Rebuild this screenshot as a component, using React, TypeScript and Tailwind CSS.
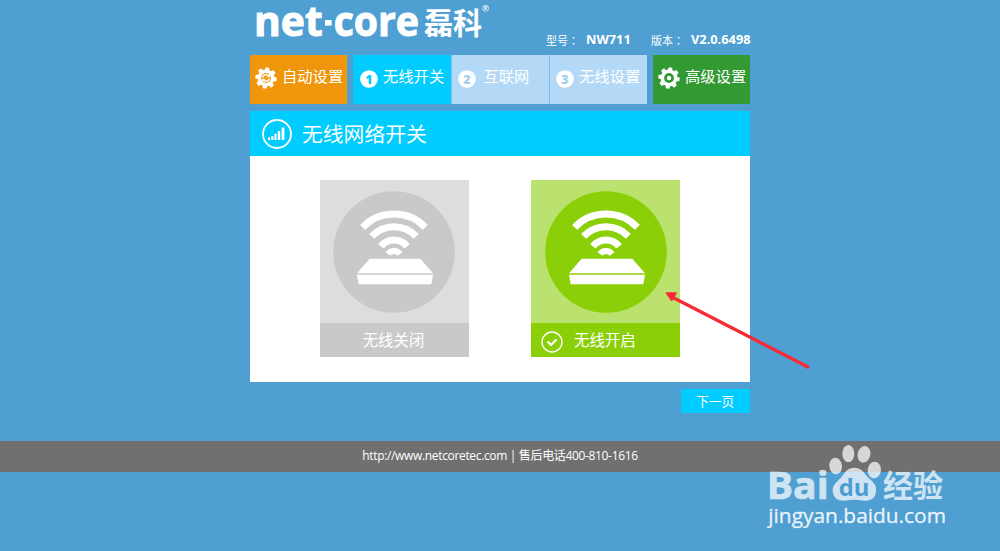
import type { ReactNode } from "react";

const steps = [
    { no: "1", label: "无线开关", box: "w-[98px] pl-[7px] bg-[#00ccff]", color: "fill-[#00ccff]", text: "ml-[5px]" },
    { no: "2", label: "互联网", box: "w-[97px] pl-[6px] ml-[0.5px] bg-[#b3d9f7]", color: "fill-[#a3cff1]", text: "ml-[8px]" },
    { no: "3", label: "无线设置", box: "ml-[1.5px] pl-[6px] w-[97px] bg-[#b3d9f7]", color: "fill-[#a3cff1]", text: "ml-[5px]" },
];

const teeth = [0, 45, 90, 135, 180, 225, 270, 315];

function Gear({ children, hole }: { children: ReactNode; hole: string }) {
    return (
        <svg viewBox="0 0 22 22" className="w-[22px] h-[22px] shrink-0">
            {teeth.map((a) => (
                <path key={a} d="M8.6 4 L9.2 0.3 H12.8 L13.4 4Z" fill="#fff" transform={`rotate(${a + 8} 11 11)`} />
            ))}
            <circle cx="11" cy="11" r="8.4" fill="#fff" />
            <circle cx="11" cy="11" r="4.9" className={hole} />
            {children}
        </svg>
    );
}

function Logo() {
    return (
        <svg viewBox="0 0 780 156" className="block w-[260px] h-[52px] -ml-[5px]" fill="#fff">
            <g fontSize="124" fontWeight="700" stroke="#fff" strokeWidth="3" fontFamily="'Open Sans', sans-serif">
                <text x="27" y="107" textLength="206" lengthAdjust="spacingAndGlyphs">net</text>
                <text x="266" y="107" textLength="256" lengthAdjust="spacingAndGlyphs">core</text>
            </g>
            <rect x="240" y="60" width="20" height="17" />
            <text x="537" y="101" fontSize="88" fontWeight="700" textLength="174" lengthAdjust="spacingAndGlyphs" fontFamily="'Noto Sans CJK SC', sans-serif">磊科</text>
            <circle cx="722" cy="25" r="9" fill="none" stroke="#fff" strokeWidth="2" />
            <text x="717" y="30" fontSize="14" fontWeight="700" fontFamily="'Open Sans', sans-serif">R</text>
        </svg>
    );
}

function Router({ color }: { color: string }) {
    return (
        <svg viewBox="54 46 366 366" className="block w-[122px] h-[122px]">
            <circle cx="237" cy="229" r="182.5" className={color} />
            <g fill="none" stroke="#fff" strokeWidth="21">
                <path d="M143 155 A131 131 0 0 1 331 155" />
                <path d="M170 182 A92 92 0 0 1 304 182" />
                <path d="M198 212 A50 50 0 0 1 276 212" />
                <path d="M219 235 A22 22 0 0 1 255 235" strokeWidth="18" />
            </g>
            <path d="M164 249H316L354 293H126Z M126 297H354L349 326H131Z" fill="#fff" />
        </svg>
    );
}

function Watermark() {
    return (
        <svg viewBox="0 0 615 300" className="absolute left-[755px] top-[435px] w-[205px] h-[100px]">
            <g fill="#fff" opacity="0.72">
                <text x="35" y="192" fontSize="115" fontWeight="700" stroke="#fff" strokeWidth="2" textLength="186" lengthAdjust="spacingAndGlyphs" fontFamily="'Open Sans', sans-serif">Bai</text>
                <ellipse cx="242" cy="93" rx="19" ry="25" transform="rotate(-8 242 93)" />
                <ellipse cx="280" cy="56" rx="18" ry="26" />
                <ellipse cx="327" cy="58" rx="19" ry="25" transform="rotate(14 327 58)" />
                <ellipse cx="358" cy="105" rx="20" ry="25" transform="rotate(5 358 105)" />
                <path d="M298 98 C321 98 327 115 344 132 C359 145 365 153 363 170 C361 190 346 198 326 197 C307 193 290 193 270 197 C249 199 234 188 233 168 C232 150 245 142 257 129 C270 112 277 98 298 98Z" />
                <text x="384" y="186" fontSize="91" fontWeight="700" textLength="180" lengthAdjust="spacingAndGlyphs" fontFamily="'Noto Sans CJK SC', sans-serif">经验</text>
            </g>
            <text x="251" y="184" fontSize="68" fontWeight="700" fill="#4b9dd2" textLength="92" lengthAdjust="spacingAndGlyphs" fontFamily="'Open Sans', sans-serif">du</text>
            <text x="40" y="265" fontSize="62" fill="#fff" fillOpacity="0.88" stroke="#fff" strokeOpacity="0.5" strokeWidth="1.5" textLength="533" lengthAdjust="spacingAndGlyphs" fontFamily="'Open Sans', sans-serif">jingyan.baidu.com</text>
        </svg>
    );
}

export default function App() {
    return (
        <div className="relative w-[1000px] h-[551px] overflow-hidden bg-[#4f9fd3] text-white font-['Open_Sans','Noto_Sans_CJK_SC',sans-serif]">
            <div className="w-[500px] mx-auto">
                <header className="flex justify-between h-[55px]">
                    <Logo />
                    <div className="flex pt-[31px] text-[11px] leading-[18px] whitespace-nowrap">
                        <span className="w-[40px]">型号<span className="font-['Noto_Sans_CJK_TC']">：</span></span>
                        <b className="w-[65px] text-[12.8px] leading-[17px]">NW711</b>
                        <span className="w-[40px]">版本<span className="font-['Noto_Sans_CJK_TC']">：</span></span>
                        <b className="w-[59px] text-[12.8px] leading-[17px]">V2.0.6498</b>
                    </div>
                </header>

                <nav className="flex h-[49px] text-[15.3px] leading-[43px] whitespace-nowrap">
                    <div className="w-[97px] bg-[#f0960a] flex pl-[5px]">
                        <div className="pt-[12px]">
                            <Gear hole="fill-[#f0960a]">
                                <g fill="none" stroke="#fff" strokeWidth="1.5">
                                    <path d="M7.7 10.5 A3.4 3.4 0 0 1 13.8 9.2 M14.3 11.5 A3.4 3.4 0 0 1 8.2 12.8" />
                                    <path d="M14.4 7.2V9.8H11.8 M7.6 14.8V12.2H10.2" strokeWidth="1.1" />
                                </g>
                            </Gear>
                        </div>
                        <span className="ml-[5px]">自动设置</span>
                    </div>
                    <div className="flex ml-[6px] bg-[#83bce8]">
                        {steps.map((s) => (
                            <div key={s.no} className={`flex ${s.box}`}>
                                <svg viewBox="0 0 18 18" className="w-[18px] h-[18px] mt-[15px] shrink-0">
                                    <circle cx="9" cy="9" r="8.8" fill="#fff" />
                                    <text x="9" y="13.5" fontSize="12.5" fontWeight="800" textAnchor="middle" className={s.color}>{s.no}</text>
                                </svg>
                                <span className={s.text}>{s.label}</span>
                            </div>
                        ))}
                    </div>
                    <div className="w-[97px] ml-auto bg-[#339933] flex pl-[5px]">
                        <div className="pt-[12px]">
                            <Gear hole="fill-[#339933]"><circle cx="11" cy="11" r="2.2" fill="#fff" /></Gear>
                        </div>
                        <span className="ml-[5px]">高级设置</span>
                    </div>
                </nav>

                <section className="mt-[7px] h-[271px] bg-white">
                    <div className="h-[45px] bg-[#00ccff] flex items-center pl-[12px]">
                        <svg viewBox="0 0 30 30" className="w-[30px] h-[30px]">
                            <circle cx="15" cy="15" r="14" fill="none" stroke="#fff" strokeWidth="1.8" />
                            <path d="M6 18.3h2.2V21H6z M9.2 17h2.2v4H9.2z M12.4 14.7h2.2V21h-2.2z M15.8 12h2.4v9h-2.4z M19.6 8.5h2.8V21h-2.8z" fill="#fff" />
                        </svg>
                        <h1 className="ml-[10px] pt-[2px] text-[20.8px] leading-[43px]">无线网络开关</h1>
                    </div>
                    <div className="flex pt-[24px] pl-[70px] gap-[62px] text-[15.4px]">
                        <div className="w-[149px] h-[177px] bg-[#dddddd] flex flex-col">
                            <div className="h-[143px] pt-[10.5px] pl-[13px]"><Router color="fill-[#c9c9c9]" /></div>
                            <div className="h-[34px] leading-[36px] bg-[#c9c9c9] text-center pr-[2px]">无线关闭</div>
                        </div>
                        <div className="w-[149px] h-[177px] bg-[#bbe26f] flex flex-col">
                            <div className="h-[143px] pt-[10.5px] pl-[14px]"><Router color="fill-[#8bcf08]" /></div>
                            <div className="h-[34px] leading-[36px] bg-[#8bcf08] flex pl-[10px]">
                                <svg viewBox="0 0 22 22" className="w-[22px] h-[22px] mt-[8px]" fill="none" stroke="#fff">
                                    <circle cx="11" cy="11" r="10" strokeWidth="1.4" />
                                    <path d="M6.5 10.5 L10 14 L15.5 8.5" strokeWidth="2.2" />
                                </svg>
                                <span className="ml-[11px]">无线开启</span>
                            </div>
                        </div>
                    </div>
                </section>

                <div className="flex justify-end mt-[7px]">
                    <button className="w-[69.5px] h-[24px] bg-[#00ccff] text-[12.7px] leading-[24px]">下一页</button>
                </div>
            </div>

            <footer className="mt-[28px] h-[31px] bg-[#707070] flex justify-center text-[12px] leading-[29px] tracking-[-0.34px] whitespace-nowrap">
                http://www.netcoretec.com | 售后电话400-810-1616
            </footer>

            <svg viewBox="0 0 170 100" className="absolute left-[650px] top-[280px] w-[170px] h-[100px]">
                <path d="M22 17 L159 87.5" stroke="#f72b35" strokeWidth="3.4" />
                <path d="M16.3 12.9 L26.2 13 L21.8 20.5Z" fill="#f72b35" stroke="#f72b35" strokeWidth="1.4" strokeLinejoin="round" />
            </svg>
            <Watermark />
        </div>
    );
}
